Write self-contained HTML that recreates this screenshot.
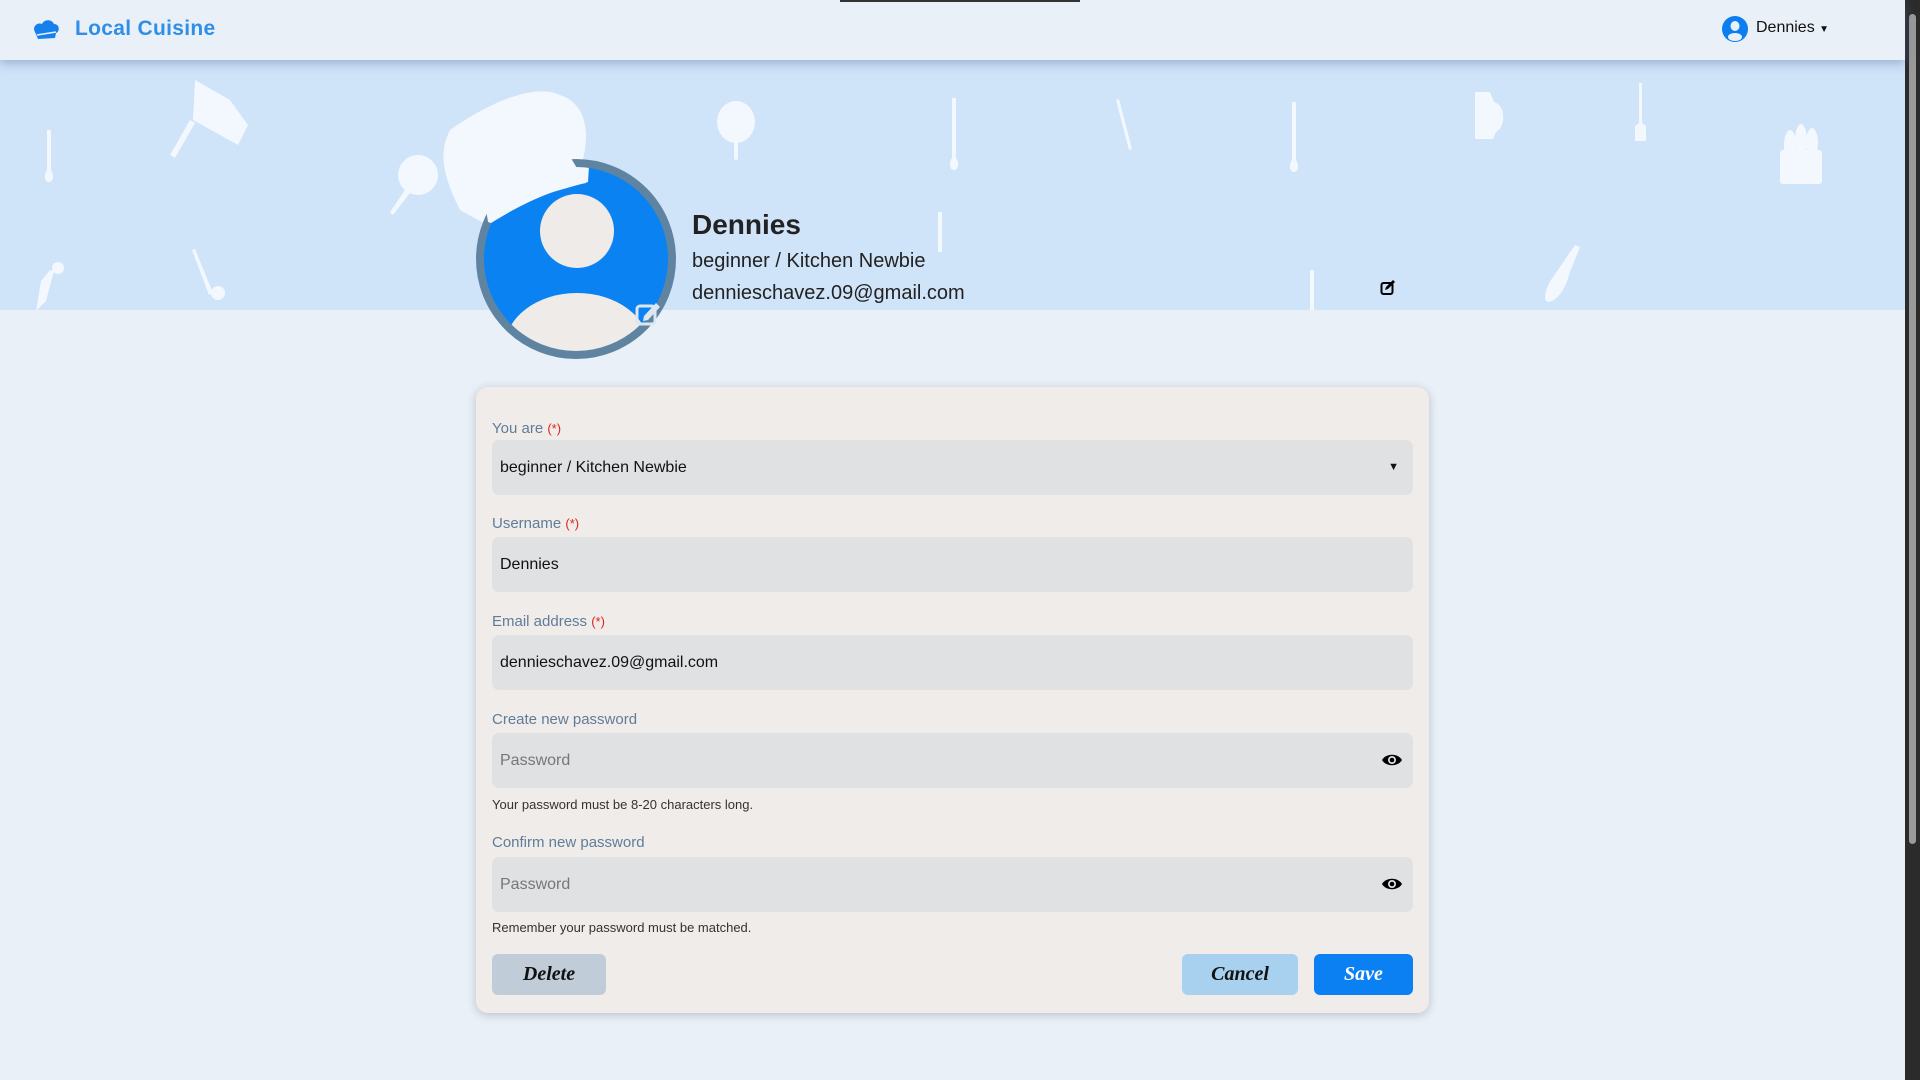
<!DOCTYPE html>
<html><head><meta charset="utf-8"><style>
*{box-sizing:border-box;margin:0;padding:0}
body{width:1920px;height:1080px;overflow:hidden;background:#e9f0f8;font-family:"Liberation Sans",sans-serif;position:relative}
.nav{position:absolute;left:0;top:0;width:1905px;height:60px;background:#e9f0f8;box-shadow:0 3px 10px rgba(80,110,150,.45);z-index:3}
.logo{position:absolute;left:75px;top:17px;font-size:21px;font-weight:bold;color:#2f8fe6;letter-spacing:.3px}
.user{position:absolute;top:19px;font-size:16px;color:#111}
.banner{position:absolute;left:0;top:60px;width:1905px;height:250px;background:#cfe3f9;overflow:hidden}
.scroll{position:absolute;right:0;top:0;width:15px;height:1080px;background:#2b2b2b}
.scroll i{position:absolute;left:4px;top:14px;width:7px;height:830px;background:#9a9a9a;border-radius:4px}
.name{position:absolute;left:692px;top:209px;font-size:28px;font-weight:600;color:#222}
.sub{position:absolute;left:692px;font-size:20px;color:#222}
.card{position:absolute;left:476px;top:387px;width:953px;height:626px;background:#f0ece9;border-radius:12px;box-shadow:0 2px 10px rgba(0,0,0,.2)}
.lbl{position:absolute;left:16px;font-size:15px;color:#5f7d99}
.lbl b{color:#e0241c;font-weight:normal;font-size:13px}
.inp{position:absolute;left:16px;width:921px;height:55px;background:#e0e1e3;border-radius:7px;font-size:16px;color:#111;padding:0 0 0 8px;line-height:55px}
.ph{color:#777}
.help{position:absolute;left:16px;font-size:13px;color:#333}
.btn{position:absolute;top:567px;height:41px;border-radius:6px;font-family:"Liberation Serif",serif;font-style:italic;font-weight:bold;font-size:20px;text-align:center;line-height:41px}
</style></head><body>
<div class="nav">
<svg style="position:absolute;left:32px;top:18px" width="28" height="24" viewBox="0 0 28 24"><path d="M3 14C0 9 5 4 10 6C12 1 20 1 22 6C28 6 28 14 24 15L23 20L6 21Z" fill="#1680ec"/><path d="M5 17L24 14" stroke="#e9f0f8" stroke-width="1.5"/></svg>
<div class="logo">Local Cuisine</div>
<svg style="position:absolute;left:1722px;top:16px" width="26" height="26" viewBox="0 0 26 26"><circle cx="13" cy="13" r="13" fill="#0b7ff0"/><ellipse cx="13" cy="10" rx="4.5" ry="5" fill="#e9f0f8"/><ellipse cx="13" cy="21" rx="7" ry="4" fill="#e9f0f8"/></svg>
<div class="user" style="left:1756px">Dennies <span style="font-size:10px">▼</span></div>
</div>
<div style="position:absolute;left:840px;top:0;width:240px;height:2px;background:#333;z-index:4"></div>
<div class="banner">
<svg width="1905" height="250" viewBox="0 60 1905 250" style="position:absolute;left:0;top:0" fill="#f3f8fe">
<path d="M47 130h4v40c3 4 3 12-2 12c-5 0-5-8-2-12z"/>
<path d="M195 80l35 20l18 25l-10 20l-45-25z"/><path d="M190 120l-20 35l5 3l20-35z"/>
<circle cx="418" cy="175" r="20"/><path d="M405 190l-15 22l3 3l17-22z"/>
<path d="M450 130C500 95 540 85 560 95C590 105 590 140 580 170L540 210L487 225L460 210C440 170 440 150 450 130z"/>
<ellipse cx="736" cy="122" rx="19" ry="21"/><rect x="734" y="138" width="4" height="22" rx="2"/>
<path d="M952 98h4v60c3 4 3 12-2 12c-5 0-5-8-2-12z"/>
<path d="M1116 100l3-1l13 50l-3 1z"/>
<path d="M1292 102h4v58c3 4 3 12-2 12c-5 0-5-8-2-12z"/>
<path d="M1475 92h15l4 10c12 3 12 25 2 30l-3 7h-18z"/>
<path d="M1639 83h3v40l4 3v15h-11v-15l4-3z"/>
<rect x="1780" y="150" width="42" height="34" rx="3"/><ellipse cx="1790" cy="145" rx="6" ry="15"/><ellipse cx="1801" cy="140" rx="6" ry="16"/><ellipse cx="1812" cy="143" rx="6" ry="15"/>
<path d="M1310 270h4v40h-4z"/><path d="M1575 245l5 2l-10 25c-5 20-15 30-22 30c-6-2-2-15 5-25z"/>
<path d="M192 250l3-1l18 44l-4 2z"/><circle cx="218" cy="293" r="7"/>
<path d="M50 270l4 1l-8 30l-10 10l5 -30z"/><circle cx="58" cy="268" r="6"/>
<path d="M938 212h4v40h-4z"/>
</svg>
</div>
<div class="scroll"><i></i></div>
<svg style="position:absolute;left:470px;top:150px;z-index:2" width="215" height="215" viewBox="470 150 215 215">
<defs><clipPath id="c"><circle cx="576" cy="259" r="96"/></clipPath></defs>
<circle cx="576" cy="259" r="96" fill="#0b82f2"/>
<g clip-path="url(#c)"><ellipse cx="577" cy="347" rx="72" ry="54" fill="#efebe8"/>
<path d="M470 150L590 150L588 182L560 190C530 198 500 210 490 220L470 230z" fill="#f3f8fe"/></g>
<ellipse cx="577" cy="231" rx="37" ry="37" fill="#efebe8"/>
<circle cx="576" cy="259" r="96" fill="none" stroke="#5f84a2" stroke-width="8"/>
<path d="M488 222L480 170L560 140L586 183C550 190 520 205 491 223z" fill="#f3f8fe"/>
<rect x="637" y="306" width="18" height="18" rx="3" fill="none" stroke="#dde7f0" stroke-width="3"/>
<path d="M644 316l12-13l4 4l-12 13l-5 1z" fill="#dde7f0"/>
</svg>
<div class="name">Dennies</div>
<div class="sub" style="top:250px">beginner / Kitchen Newbie</div>
<div class="sub" style="top:282px">dennieschavez.09@gmail.com</div>
<svg style="position:absolute;left:1380px;top:279px" width="16" height="17" viewBox="0 0 16 17"><rect x="1.5" y="4" width="11" height="11" rx="2" fill="none" stroke="#000" stroke-width="2"/><path d="M5 11l1-3l7-7l2 2l-7 7z" fill="#000"/></svg>
<div class="card">
<div class="lbl" style="top:33px">You are <b>(*)</b></div>
<div class="inp" style="top:53px">beginner / Kitchen Newbie<span style="position:absolute;right:14px;font-size:11px">▼</span></div>
<div class="lbl" style="top:128px">Username <b>(*)</b></div>
<div class="inp" style="top:150px">Dennies</div>
<div class="lbl" style="top:226px">Email address <b>(*)</b></div>
<div class="inp" style="top:248px">dennieschavez.09@gmail.com</div>
<div class="lbl" style="top:324px">Create new password</div>
<div class="inp ph" style="top:346px">Password<svg style="position:absolute;right:10px;top:19px" width="22" height="16" viewBox="0 0 22 16"><path d="M1 8C5 1 17 1 21 8C17 15 5 15 1 8z" fill="#000"/><circle cx="11" cy="8" r="4" fill="#e0e1e3"/><circle cx="11" cy="8" r="2.3" fill="#000"/></svg></div>
<div class="help" style="top:410px">Your password must be 8-20 characters long.</div>
<div class="lbl" style="top:447px">Confirm new password</div>
<div class="inp ph" style="top:470px">Password<svg style="position:absolute;right:10px;top:19px" width="22" height="16" viewBox="0 0 22 16"><path d="M1 8C5 1 17 1 21 8C17 15 5 15 1 8z" fill="#000"/><circle cx="11" cy="8" r="4" fill="#e0e1e3"/><circle cx="11" cy="8" r="2.3" fill="#000"/></svg></div>
<div class="help" style="top:533px">Remember your password must be matched.</div>
<div class="btn" style="left:16px;width:114px;background:#c0ccd8;color:#111">Delete</div>
<div class="btn" style="left:706px;width:116px;background:#a8d0ef;color:#111">Cancel</div>
<div class="btn" style="left:838px;width:99px;background:#0b80f2;color:#fff">Save</div>
</div>
</body></html>
